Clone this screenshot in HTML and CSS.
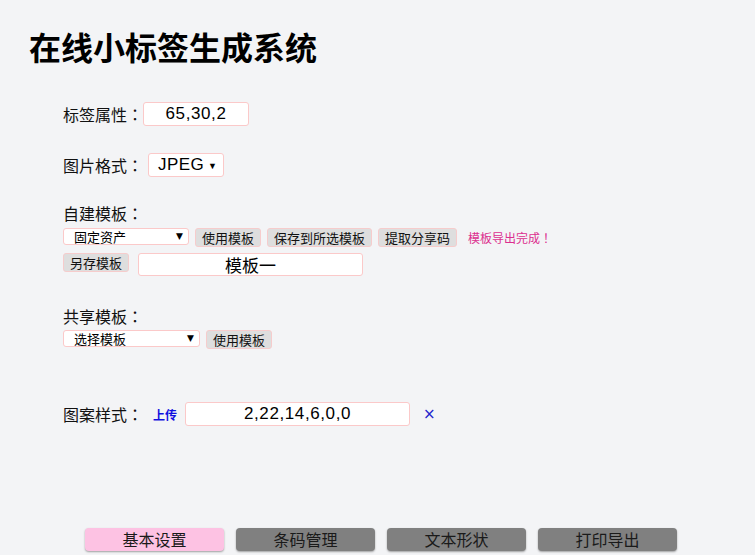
FILE: index.html
```html
<!DOCTYPE html>
<html lang="zh-CN">
<head>
<meta charset="utf-8">
<title>在线小标签生成系统</title>
<link rel="stylesheet" href="styles.css">
</head>
<body>
<h1 class="title">在线小标签生成系统</h1>
<div class="form">
  <div class="row row-attr">
    <span class="label">标签属性<span class="colon">：</span></span>
    <div class="field field-attr">65,30,2</div>
  </div>
  <div class="row row-fmt">
    <span class="label">图片格式<span class="colon">：</span></span>
    <div class="fmt-select"><span>JPEG</span><span class="arrow-sm">▼</span></div>
  </div>
  <div class="section-label sec-own">自建模板<span class="colon">：</span></div>
  <div class="controls">
    <div class="small-select sel-own"><span>固定资产</span><span class="arrow-xs">▼</span></div>
    <div class="btn">使用模板</div>
    <div class="btn">保存到所选模板</div>
    <div class="btn">提取分享码</div>
    <span class="notice">模板导出完成<span class="colon">！</span></span>
  </div>
  <div class="controls controls-2">
    <div class="btn">另存模板</div>
    <div class="field field-name">模板一</div>
  </div>
  <div class="section-label sec-share">共享模板<span class="colon">：</span></div>
  <div class="controls">
    <div class="small-select sel-share"><span>选择模板</span><span class="arrow-xs">▼</span></div>
    <div class="btn">使用模板</div>
  </div>
  <div class="row row-pattern">
    <span class="label">图案样式<span class="colon">：</span></span>
    <span class="upload">上传</span>
    <div class="field field-pattern">2,22,14,6,0,0</div>
    <span class="close">×</span>
  </div>
</div>
<div class="tabs">
  <div class="tab tab-active">基本设置</div>
  <div class="tab">条码管理</div>
  <div class="tab">文本形状</div>
  <div class="tab">打印导出</div>
</div>
</body>
</html>
```
FILE: styles.css
```css
html, body {
  margin: 0;
  padding: 0;
}
body {
  width: 755px;
  height: 555px;
  overflow: hidden;
  background: #f3f4f6;
  font-family: "Liberation Sans", "Noto Sans CJK SC", sans-serif;
  color: #111;
}
.title {
  margin: 0;
  padding: 28px 0 0 29px;
  height: 36px;
  line-height: 36px;
  font-size: 32px;
  font-weight: bold;
  color: #000;
  font-family: "Noto Sans CJK SC", sans-serif;
}
.form {
  padding-left: 63px;
}
.row {
  display: flex;
  align-items: center;
}
.label, .section-label {
  font-family: "Noto Sans CJK SC", sans-serif;
  font-size: 16px;
  line-height: 20px;
  width: 80px;
  flex-shrink: 0;
  white-space: nowrap;
  color: #111;
}
.colon {
  font-family: "Noto Sans CJK JP", "Noto Sans CJK SC", sans-serif;
  display: inline-block;
  width: 1em;
  text-align: center;
}
.section-label {
  width: auto;
}
.field {
  box-sizing: border-box;
  background: #fff;
  border: 1px solid #fbc9c9;
  border-radius: 3px;
  text-align: center;
  font-size: 17px;
  letter-spacing: 0.6px;
  color: #000;
  font-family: "Liberation Sans", "Noto Sans CJK SC", sans-serif;
}
.row-attr {
  margin-top: 38px;
  height: 24px;
}
.field-attr {
  width: 106px;
  height: 24px;
  line-height: 22px;
}
.row-fmt {
  margin-top: 27px;
  height: 24px;
}
.fmt-select {
  box-sizing: border-box;
  margin-left: 5px;
  width: 76px;
  height: 24px;
  background: #fff;
  border: 1px solid #fbc9c9;
  border-radius: 3px;
  display: flex;
  align-items: center;
  padding-left: 9px;
  font-size: 17px;
  letter-spacing: 0.4px;
  color: #000;
}
.arrow-sm {
  font-size: 9px;
  margin-left: 4px;
  margin-top: 2px;
}
.sec-own {
  margin-top: 26px;
}
.controls {
  display: flex;
  align-items: flex-start;
  gap: 6px;
  margin-top: 5px;
}
.controls-2 {
  margin-top: 6px;
  gap: 9px;
}
.small-select {
  box-sizing: border-box;
  height: 17px;
  background: #fff;
  border: 1px solid #fbc9c9;
  border-radius: 3px;
  display: flex;
  align-items: center;
  justify-content: space-between;
  padding: 0 5px 0 10px;
  font-family: "Noto Sans CJK SC", sans-serif;
  font-size: 13px;
  line-height: 15px;
  color: #000;
}
.arrow-xs {
  font-size: 9px;
  font-family: "DejaVu Sans", sans-serif;
}
.sel-own {
  width: 126px;
}
.sel-share {
  width: 137px;
}
.btn {
  box-sizing: border-box;
  height: 19px;
  padding: 0 6px;
  background: #dedede;
  border: 1px solid #f6cccc;
  border-radius: 3px;
  font-family: "Noto Sans CJK SC", sans-serif;
  font-size: 13px;
  line-height: 17px;
  color: #111;
  white-space: nowrap;
}
.notice {
  margin-left: 5px;
  font-family: "Noto Sans CJK SC", sans-serif;
  font-size: 12px;
  line-height: 19px;
  color: #dc2f8f;
  white-space: nowrap;
}
.field-name {
  width: 225px;
  height: 23px;
  line-height: 21px;
  letter-spacing: 0;
  font-family: "Noto Sans CJK SC", sans-serif;
}
.sec-share {
  margin-top: 30px;
}
.sec-share + .controls {
  margin-top: 4px;
}
.row-pattern {
  margin-top: 53px;
  height: 24px;
}
.row-pattern .label {
  width: 90px;
}
.upload {
  font-family: "Noto Sans CJK SC", sans-serif;
  font-size: 12px;
  font-weight: bold;
  color: #1010e0;
  width: 32px;
  flex-shrink: 0;
}
.field-pattern {
  width: 225px;
  height: 24px;
  line-height: 22px;
}
.close {
  margin-left: 13px;
  font-size: 15px;
  color: #2222cc;
  font-family: "DejaVu Sans", sans-serif;
}
.tabs {
  display: flex;
  gap: 12px;
  margin-top: 102px;
  padding-left: 85px;
}
.tab {
  width: 139px;
  height: 23px;
  line-height: 23px;
  text-align: center;
  background: #808080;
  border-radius: 4px;
  box-shadow: 0 1px 2px rgba(0, 0, 0, 0.35);
  font-family: "Noto Sans CJK SC", sans-serif;
  font-size: 16px;
  color: #1a1a1a;
}
.tab-active {
  background: #fdc2e3;
}
```
